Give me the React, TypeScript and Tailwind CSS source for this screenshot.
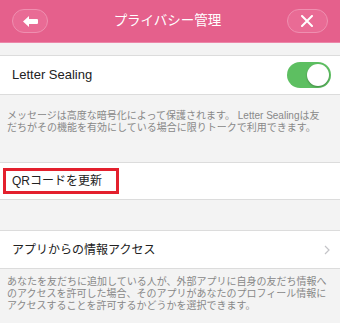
import React from "react";

const font = { fontFamily: '"Liberation Sans", "Noto Sans CJK JP", sans-serif' };

function Toggle() {
  return (
    <div className="relative h-[26px] w-[44px] rounded-full bg-[#5dbf61]">
      <div className="absolute right-[2px] top-[2px] h-[22px] w-[22px] rounded-full bg-white shadow-[0_1px_2px_rgba(0,0,0,0.3)]" />
    </div>
  );
}

export default function App() {
  return (
    <div className="h-[323px] w-[340px] overflow-hidden bg-[#f3f3f3]" style={font}>
      {/* header */}
      <div className="flex h-[43px] items-center justify-between border-b border-[#ec86a9] bg-[#e5608c] px-3">
        <button
          type="button"
          className="flex h-[24px] w-[36px] items-center justify-center rounded-full border border-[#ef8fb0] bg-[#e96b95]"
        >
          <svg width="15" height="11" viewBox="0 0 15 11">
            <path d="M0 5.5 L6 0 V3 H14 Q15 3 15 4 V7 Q15 8 14 8 H6 V11 Z" fill="white" />
          </svg>
        </button>
        <div className="text-[13.5px] text-white">プライバシー管理</div>
        <button
          type="button"
          className="flex h-[24px] w-[41px] items-center justify-center rounded-full border border-[#ef8fb0] bg-[#e96b95]"
        >
          <svg width="12" height="12" viewBox="0 0 12 12">
            <path d="M1 1 L11 11 M11 1 L1 11" stroke="white" strokeWidth="2" strokeLinecap="round" />
          </svg>
        </button>
      </div>

      <div className="h-[12px]" />

      {/* Letter Sealing */}
      <div className="flex h-[40px] items-center justify-between border-y border-[#dcdcdc] bg-white pl-3 pr-[9px]">
        <span className="text-[13px] text-[#222]">Letter Sealing</span>
        <Toggle />
      </div>
      <div className="h-[67px] px-[7px] pt-[15px] text-[10px] leading-[12px] text-[#888]">
        メッセージは高度な暗号化によって保護されます。 Letter Sealingは友
        <br />
        だちがその機能を有効にしている場合に限りトークで利用できます。
      </div>

      {/* QR */}
      <div className="flex h-[38px] items-center border-y border-[#dcdcdc] bg-white pl-[3px]">
        <div className="flex h-[26px] w-[116px] items-center border-[3px] border-[#e3202d] pl-[6px] text-[12px] text-[#222]">
          QRコードを更新
        </div>
      </div>

      <div className="h-[30px]" />

      {/* app access */}
      <div className="flex h-[39px] items-center justify-between border-y border-[#dcdcdc] bg-white pl-3 pr-[10px]">
        <span className="text-[12px] text-[#222]">アプリからの情報アクセス</span>
        <svg width="6" height="10" viewBox="0 0 6 10">
          <path d="M1 1 L5 5 L1 9" stroke="#c4c4c8" strokeWidth="1.2" fill="none" />
        </svg>
      </div>
      <div className="px-[7px] pt-[7px] text-[10px] leading-[12px] text-[#888]">
        あなたを友だちに追加している人が、外部アプリに自身の友だち情報へ
        <br />
        のアクセスを許可した場合、そのアプリがあなたのプロフィール情報に
        <br />
        アクセスすることを許可するかどうかを選択できます。
      </div>
    </div>
  );
}
